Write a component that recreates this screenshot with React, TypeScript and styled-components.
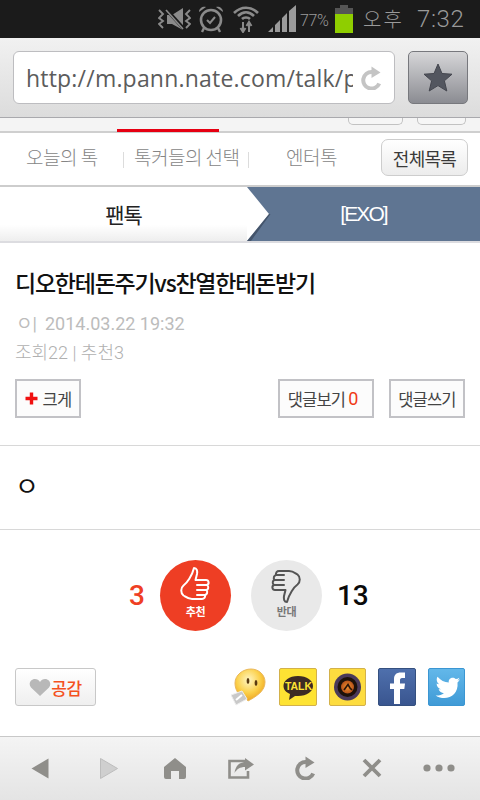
import styled, { createGlobalStyle } from "styled-components"

const cjk = `"Noto Sans CJK KR", "Noto Sans", sans-serif`

const GlobalStyle = createGlobalStyle`
  html, body {
    margin: 0;
    padding: 0;
    background: #fff;
  }
  * {
    box-sizing: border-box;
  }
`

const Screen = styled.div`
  width: 480px;
  height: 800px;
  overflow: hidden;
  display: flex;
  flex-direction: column;
  background: #fff;
  font-family: ${cjk};
`

const StatusBar = styled.div`
  height: 38px;
  flex: none;
  background: #1b1b1b;
  color: #9a9a9a;
  display: flex;
  align-items: center;
  padding-left: 158px;
`

const StatusIcon = styled.svg<{ $gap?: number }>`
  flex: none;
  display: block;
  margin-right: ${(p) => p.$gap ?? 0}px;
`

const Percent = styled.span`
  font-family: Roboto, sans-serif;
  font-size: 16px;
  font-weight: 300;
  letter-spacing: -0.4px;
  width: 35px;
  flex: none;
  margin-top: 3px;
  margin-left: 3px;
`

const Meridiem = styled.span`
  font-size: 20px;
  font-weight: 300;
  letter-spacing: 2px;
  width: 40px;
  flex: none;
  white-space: nowrap;
  margin-left: 10px;
  margin-top: -2px;
`

const Clock = styled.span`
  font-family: Roboto, sans-serif;
  font-size: 24px;
  font-weight: 300;
  letter-spacing: 0.6px;
  margin-left: 14px;
`

const BrowserBar = styled.div`
  height: 80px;
  flex: none;
  background: linear-gradient(#f1f1f1, #dcdcdc);
  border-bottom: 1px solid #a9a9ad;
  display: flex;
  align-items: flex-start;
  padding: 13px 12px 0 13px;
  gap: 13px;
`

const UrlField = styled.div`
  width: 382px;
  height: 53px;
  background: #fff;
  border: 1px solid #bdbdc0;
  border-radius: 6px;
  display: flex;
  align-items: center;
  gap: 8px;
  padding: 0 0 0 12px;
`

const UrlText = styled.div`
  width: 327px;
  flex: none;
  overflow: hidden;
  white-space: nowrap;
  font-family: "Open Sans", sans-serif;
  font-size: 23px;
  line-height: 30px;
  color: #5c5c5c;
  letter-spacing: 0.2px;
`

const StarButton = styled.div`
  width: 60px;
  height: 53px;
  border: 1px solid #77787d;
  border-radius: 5px;
  background: linear-gradient(#d6d6d8, #8b8c92);
  display: flex;
  align-items: center;
  justify-content: center;
`

const SubStrip = styled.div`
  height: 15px;
  flex: none;
  background: #f4f4f4;
  border-bottom: 2px solid #cfcfcf;
  display: flex;
  justify-content: space-between;
  position: relative;
`

const ActiveMark = styled.div`
  position: absolute;
  left: 117px;
  bottom: -1px;
  width: 102px;
  height: 3px;
  background: #e60012;
`

const StubGroup = styled.div`
  margin-left: auto;
  margin-right: 14px;
  display: flex;
  gap: 14px;
`

const Stub = styled.div<{ $w: number }>`
  width: ${(p) => p.$w}px;
  height: 7px;
  background: #f6f6f6;
  border: 1px solid #c2c2c2;
  border-top: none;
  border-radius: 0 0 5px 5px;
`

const NavBar = styled.div`
  height: 52px;
  flex: none;
  background: #fff;
  display: flex;
  align-items: center;
`

const NavItem = styled.span<{ $left: number; $width: number }>`
  margin-left: ${(p) => p.$left}px;
  width: ${(p) => p.$width}px;
  flex: none;
  font-size: 19px;
  font-weight: 300;
  letter-spacing: -0.5px;
  color: #858585;
  white-space: nowrap;
  line-height: 24px;
  margin-top: -4px;
`

const NavDivider = styled.span`
  width: 1px;
  height: 16px;
  margin-top: 2px;
  flex: none;
  background: #dcdcdc;
`

const AllButton = styled.div`
  margin-left: 39px;
  margin-top: -3px;
  width: 87px;
  height: 37px;
  flex: none;
  border: 1px solid #cdcdcd;
  border-radius: 7px;
  background: linear-gradient(#fff, #ececec);
  color: #3a3a3a;
  font-size: 18px;
  letter-spacing: -0.7px;
  display: flex;
  align-items: center;
  justify-content: center;
`

const Crumbs = styled.div`
  height: 58px;
  flex: none;
  border-top: 2px solid #cdcdcd;
  border-bottom: 2px solid #dcdce0;
  display: grid;
  grid-template-columns: 247px 1fr;
  position: relative;
`

const CrumbHome = styled.div`
  background: linear-gradient(#fff 70%, #eeeeee);
  color: #222;
  font-size: 21px;
  letter-spacing: -1px;
  display: flex;
  align-items: center;
  justify-content: center;
`

const CrumbCurrent = styled.div`
  background: #5f7592;
  color: #fff;
  display: flex;
  align-items: center;
  justify-content: center;
  letter-spacing: -1.9px;
  font-family: "Liberation Sans", sans-serif;
  font-size: 21px;
`

const CrumbArrow = styled.svg`
  position: absolute;
  left: 247px;
  top: 0;
`

const Article = styled.div`
  padding: 0 15px;
  height: 203px;
  flex: none;
  border-bottom: 1px solid #d8d8d8;
`

const Title = styled.h1`
  margin: 23px 0 0 0;
  font-size: 23px;
  line-height: 32px;
  font-weight: 500;
  letter-spacing: -1.25px;
  color: #111;
  white-space: nowrap;
`

const MetaLine = styled.div`
  margin: 14px 0 0 1px;
  font-family: Roboto, ${cjk};
  font-size: 18px;
  line-height: 24px;
  color: #bcbcbc;
  white-space: nowrap;
  display: flex;
  gap: 8px;
`

const StatLine = styled.div`
  margin-top: 5px;
  font-family: Roboto, ${cjk};
  font-size: 18px;
  font-weight: 300;
  line-height: 24px;
  color: #b0b0b0;
  white-space: nowrap;
`

const ActionRow = styled.div`
  margin-top: 14px;
  display: flex;
  gap: 15px;
`

const ActionButton = styled.div<{ $w: number; $push?: boolean; $gap: number; $inset?: number }>`
  width: ${(p) => p.$w}px;
  height: 39px;
  margin-left: ${(p) => (p.$push ? "auto" : "0")};
  padding-right: ${(p) => p.$inset ?? 0}px;
  border: 2px solid #c2c2c6;
  background: #fcfcfc;
  color: #444;
  font-size: 16.5px;
  letter-spacing: -0.8px;
  display: flex;
  align-items: center;
  justify-content: center;
  gap: ${(p) => p.$gap}px;
`

const Count = styled.span`
  color: #f03a17;
  font-family: Roboto, sans-serif;
  font-size: 18px;
  letter-spacing: 0;
`

const Body = styled.div`
  height: 84px;
  flex: none;
  border-bottom: 1px solid #d8d8d8;
  padding: 23px 15px 0;
  font-size: 26px;
  line-height: 32px;
  color: #111;
`

const VoteRow = styled.div`
  height: 138px;
  flex: none;
  display: flex;
  align-items: flex-start;
  padding: 30px 0 0 129px;
`

const VoteCount = styled.span<{ $hot?: boolean; $left?: number }>`
  margin-left: ${(p) => p.$left ?? 0}px;
  font-family: Roboto, sans-serif;
  font-size: 28px;
  font-weight: 500;
  line-height: 71px;
  color: ${(p) => (p.$hot ? "#ef3f24" : "#0a0a0a")};
`

const VoteBadge = styled.div<{ $hot?: boolean; $left: number }>`
  width: 71px;
  height: 71px;
  margin-left: ${(p) => p.$left}px;
  border-radius: 50%;
  background: ${(p) => (p.$hot ? "#ee3e24" : "#e9e9e9")};
  color: ${(p) => (p.$hot ? "#fff" : "#777")};
  display: flex;
  flex-direction: column;
  align-items: center;
  padding-top: 6px;
  font-size: 11px;
  font-weight: 700;
  line-height: 14px;
  letter-spacing: -0.5px;
`

const ThumbGraphic = styled.svg<{ $down?: boolean }>`
  display: block;
  transform: ${(p) => (p.$down ? "rotate(180deg)" : "none")};
`

const ShareRow = styled.div`
  height: 68px;
  flex: none;
  display: flex;
  align-items: flex-start;
  padding: 0 15px;
`

const LoveButton = styled.div`
  width: 81px;
  height: 38px;
  border: 1px solid #c8c8c8;
  border-radius: 3px;
  background: linear-gradient(#fff, #efefef);
  color: #f4511e;
  font-size: 17px;
  font-weight: 500;
  letter-spacing: -0.5px;
  display: flex;
  align-items: center;
  justify-content: center;
  margin-right: auto;
`

const ShareIcon = styled.svg<{ $gap: number }>`
  display: block;
  flex: none;
  margin-left: ${(p) => p.$gap}px;
`

const BottomBar = styled.div`
  flex: 1;
  background: linear-gradient(#f4f4f4, #e4e4e4);
  border-top: 1px solid #c8c8c8;
  display: grid;
  grid-template-columns: repeat(7, 1fr);
  padding: 0 8px 0 7px;
  align-items: center;
`

const BarButton = styled.div<{ $nudge?: number }>`
  display: flex;
  justify-content: center;
  margin-top: -1px;
  margin-left: ${(p) => (p.$nudge ?? 0) * 2}px;
`

function ThumbIcon({ color, down }: { color: string; down?: boolean }) {
  return (
    <ThumbGraphic $down={down} width="32" height="38" viewBox="0 0 32 38" aria-hidden>
      <path
        d="M15 2 C18 2 18.5 5 18 8 L16.5 14 L27 14 C30 14 30.5 18 28 19 C30 20.5 29.5 23.5 27.5 24 C29 26 28 28.5 26 29 C26.5 31.5 25 33 23 33 L13 33 C9 33 7 31 4.5 29.5 C1.5 27 1.5 22 4.5 19.5 C8 17 13 10 15 2 Z M18 19 H28 M18 24 H27.5 M18 29 H26"
        fill="none"
        stroke={color}
        strokeWidth="2"
        strokeLinejoin="round"
        strokeLinecap="round"
      />
    </ThumbGraphic>
  )
}

const navIcon = "#8f8e8a"

export default function App() {
  return (
    <Screen>
      <GlobalStyle />
      <StatusBar>
        <StatusIcon width="33" height="24" viewBox="0 0 33 24" $gap={7} aria-hidden>
          <path d="M9 8 H14 L25 1 V23 L14 17 H9 Z" fill="#8a8a8a" />
          <path d="M8 2 L26 22" stroke="#1b1b1b" strokeWidth="3.4" />
          <path d="M8 3 L25 22" stroke="#8a8a8a" strokeWidth="1.6" />
          <path d="M1 3 L5 7 L1 11 L5 14 L1 17 L5 21 M32 3 L28 7 L32 11 L28 14 L32 17 L28 21" fill="none" stroke="#8a8a8a" strokeWidth="1.9" />
        </StatusIcon>
        <StatusIcon width="26" height="28" viewBox="0 0 26 28" $gap={8} aria-hidden>
          <circle cx="13" cy="15" r="10" fill="none" stroke="#8a8a8a" strokeWidth="2.6" />
          <path d="M9 15 L12 18 L17 12" fill="none" stroke="#8a8a8a" strokeWidth="2" />
          <path d="M1 7 C1 3 5 1 8 2 Z M25 7 C25 3 21 1 18 2 Z" fill="#8a8a8a" />
          <path d="M6 23 L4 27 M20 23 L22 27" stroke="#8a8a8a" strokeWidth="2.4" />
        </StatusIcon>
        <StatusIcon width="28" height="28" viewBox="0 0 28 28" $gap={8} aria-hidden>
          <path d="M2 8 C9 1 19 1 26 8 M6 11 C11 6 17 6 22 11 M10 14 C12 12 16 12 18 14" fill="none" stroke="#8a8a8a" strokeWidth="2.6" />
          <path d="M11 17 V26 M8.5 23 L11 27 L13.5 23 M17 27 V18 M14.5 21 L17 17 L19.5 21" fill="none" stroke="#8a8a8a" strokeWidth="2" />
        </StatusIcon>
        <StatusIcon width="29" height="28" viewBox="0 0 29 28" aria-hidden>
          <path d="M0 27 L5 22 V27 Z M7 27 V20 L12 15 V27 Z M14 27 V13 L19 8 V27 Z M21 27 V6 L28 0 V27 Z" fill="#9a9a9a" />
        </StatusIcon>
        <Percent>77%</Percent>
        <StatusIcon width="18" height="28" viewBox="0 0 18 28" aria-hidden>
          <path d="M5 0 H13 V3 H18 V9 H0 V3 H5 Z" fill="#555" />
          <rect y="9" width="18" height="19" fill="#8fce00" />
        </StatusIcon>
        <Meridiem>오후</Meridiem>
        <Clock>7:32</Clock>
      </StatusBar>
      <BrowserBar>
        <UrlField>
          <UrlText>http://m.pann.nate.com/talk/p</UrlText>
          <svg width="22" height="24" viewBox="0 0 22 24" aria-hidden>
            <path d="M18.2 17.5 A8.3 8.3 0 1 1 11 6" fill="none" stroke="#c4c4c4" strokeWidth="4" />
            <path d="M10.5 0.5 L19.5 6.5 L10.5 12 Z" fill="#c4c4c4" />
          </svg>
        </UrlField>
        <StarButton>
          <svg width="30" height="29" viewBox="0 0 30 29" aria-hidden>
            <path d="M15 1 L19 10.5 L29 11.2 L21.4 17.8 L23.8 28 L15 22.6 L6.2 28 L8.6 17.8 L1 11.2 L11 10.5 Z" fill="#53565f" stroke="#44464e" strokeWidth="1" strokeLinejoin="round" />
          </svg>
        </StarButton>
      </BrowserBar>
      <SubStrip>
        <ActiveMark />
        <StubGroup>
          <Stub $w={55} />
          <Stub $w={49} />
        </StubGroup>
      </SubStrip>
      <NavBar>
        <NavItem $left={26} $width={97}>오늘의 톡</NavItem>
        <NavDivider />
        <NavItem $left={10} $width={114}>톡커들의 선택</NavItem>
        <NavDivider />
        <NavItem $left={37} $width={56}>엔터톡</NavItem>
        <AllButton>전체목록</AllButton>
      </NavBar>
      <Crumbs>
        <CrumbHome>팬톡</CrumbHome>
        <CrumbCurrent>[EXO]</CrumbCurrent>
        <CrumbArrow width="24" height="54" viewBox="0 0 24 54" aria-hidden>
          <path d="M0 0 L22 27 L0 54 Z" fill="#fff" />
          <path d="M22 27 L0 54 L4 54 L23.5 27 Z" fill="#3b4a5e" opacity="0.75" />
        </CrumbArrow>
      </Crumbs>
      <Article>
        <Title>디오한테돈주기vs찬열한테돈받기</Title>
        <MetaLine>
          <span>ㅇ|</span>
          <span>2014.03.22 19:32</span>
        </MetaLine>
        <StatLine>조회22 | 추천3</StatLine>
        <ActionRow>
          <ActionButton $w={66} $gap={5}>
            <svg width="13" height="13" viewBox="0 0 13 13" aria-hidden>
              <path d="M6.5 0.5 V12.5 M0.5 6.5 H12.5" stroke="#f01010" strokeWidth="3.4" />
            </svg>
            크게
          </ActionButton>
          <ActionButton $w={96} $gap={3} $inset={6} $push>
            댓글보기<Count>0</Count>
          </ActionButton>
          <ActionButton $w={76} $gap={0}>댓글쓰기</ActionButton>
        </ActionRow>
      </Article>
      <Body>ㅇ</Body>
      <VoteRow>
        <VoteCount $hot>3</VoteCount>
        <VoteBadge $hot $left={15}>
          <ThumbIcon color="#fff" />
          추천
        </VoteBadge>
        <VoteBadge $left={20}>
          <ThumbIcon color="#555" down />
          반대
        </VoteBadge>
        <VoteCount $left={15}>13</VoteCount>
      </VoteRow>
      <ShareRow>
        <LoveButton>
          <svg width="22" height="19" viewBox="0 0 22 19" aria-hidden>
            <path d="M11 18 L2 9.5 C-1 6 1.5 1 6 1 C8 1 10 2 11 4 C12 2 14 1 16 1 C20.5 1 23 6 20 9.5 Z" fill="#b8b8b8" />
          </svg>
          공감
        </LoveButton>
        <ShareIcon width="35" height="38" viewBox="0 0 35 38" $gap={0} aria-hidden>
          <defs>
            <radialGradient id="smile" cx="45%" cy="35%" r="65%">
              <stop offset="0%" stopColor="#fff6c4" />
              <stop offset="60%" stopColor="#fbd04a" />
              <stop offset="100%" stopColor="#eea31e" />
            </radialGradient>
          </defs>
          <path d="M20 1 C28 1 34 7 34 14 C34 23 26 28 17 33 L15 30 C8 29 4 22 4 15 C4 7 12 1 20 1 Z" fill="url(#smile)" stroke="#eab85c" />
          <ellipse cx="17" cy="13" rx="1.4" ry="3" fill="#5a3a10" />
          <ellipse cx="25" cy="15" rx="1.4" ry="3" fill="#5a3a10" />
          <path d="M0 27 L11 23 L16 31 L5 37 Z" fill="#c9c9c9" stroke="#eee" />
          <path d="M5 32 L11 27" stroke="#fff" strokeWidth="2" />
        </ShareIcon>
        <ShareIcon width="38" height="38" viewBox="0 0 38 38" $gap={13} aria-hidden>
          <rect x="0.5" y="0.5" width="37" height="37" rx="1.5" fill="#fee333" stroke="#d3b14a" />
          <path d="M19 8 C28 8 34 12.5 34 18 C34 23.5 28 28 19 28 L16 28 L10 32 L11 26 C7 24.5 4.5 21.5 4.5 18 C4.5 12.5 10 8 19 8 Z" fill="#3d2b24" />
          <text x="19.5" y="22" fontFamily="Liberation Sans, sans-serif" fontSize="10.5" fontWeight="700" textAnchor="middle" fill="#fee333">TALK</text>
        </ShareIcon>
        <ShareIcon width="37" height="38" viewBox="0 0 37 38" $gap={12} aria-hidden>
          <defs>
            <radialGradient id="lens" cx="50%" cy="50%" r="50%">
              <stop offset="0%" stopColor="#f2922e" />
              <stop offset="100%" stopColor="#b5521a" />
            </radialGradient>
          </defs>
          <rect x="0.5" y="0.5" width="36" height="37" rx="1.5" fill="#fddc3f" stroke="#d3b14a" />
          <circle cx="18.5" cy="19" r="13.5" fill="#4a3a5a" />
          <circle cx="18.5" cy="19" r="10" fill="#1e120a" />
          <circle cx="18.5" cy="19" r="6.5" fill="url(#lens)" />
          <path d="M15 22 L19 16.5 L21 20 L23 22" fill="none" stroke="#2a1508" strokeWidth="1.6" />
        </ShareIcon>
        <ShareIcon width="38" height="38" viewBox="0 0 38 38" $gap={12} aria-hidden>
          <defs>
            <linearGradient id="fb" x1="0" y1="0" x2="0" y2="1">
              <stop offset="0%" stopColor="#4f70ad" />
              <stop offset="100%" stopColor="#39558f" />
            </linearGradient>
          </defs>
          <rect x="0.5" y="0.5" width="37" height="37" rx="1.5" fill="url(#fb)" stroke="#35507f" />
          <path d="M16 36 V21 H12 V15.5 H16 V11 C16 6.5 19 4.5 22.5 4.5 H27 V10 H24 C22.5 10 22 11 22 12 V15.5 H27 L26.3 21 H22 V36 Z" fill="#fff" />
        </ShareIcon>
        <ShareIcon width="37" height="38" viewBox="0 0 37 38" $gap={12} aria-hidden>
          <defs>
            <linearGradient id="tw" x1="0" y1="0" x2="0" y2="1">
              <stop offset="0%" stopColor="#63b8ea" />
              <stop offset="100%" stopColor="#3f9ad6" />
            </linearGradient>
          </defs>
          <rect x="0.5" y="0.5" width="36" height="37" rx="1.5" fill="url(#tw)" stroke="#3b96d2" />
          <path d="M32 11 C31 12 30 12.5 29 13 C30 12.3 31 11 31.3 9.7 C30.2 10.4 29 10.9 27.7 11.1 C25 8.2 20 10.5 20.8 14.6 C16.5 14.4 12.5 12.3 9.5 8.8 C8 11.4 8.8 14.6 11.2 16.2 C10.2 16.2 9.4 15.9 8.6 15.5 C8.6 18.3 10.5 20.6 13 21.2 C12.2 21.4 11.4 21.4 10.6 21.3 C11.4 23.5 13.4 25.2 15.9 25.2 C13.5 27 10.6 27.8 7.6 27.5 C18 34 31 27.5 29.5 14.4 C30.5 13.6 31.4 12.4 32 11 Z" fill="#fff" />
        </ShareIcon>
      </ShareRow>
      <BottomBar>
        <BarButton>
          <svg width="18" height="21" viewBox="0 0 18 21" aria-hidden>
            <path d="M17.5 0.5 V20.5 L0.5 10.5 Z" fill={navIcon} />
          </svg>
        </BarButton>
        <BarButton $nudge={2}>
          <svg width="18" height="21" viewBox="0 0 18 21" aria-hidden>
            <path d="M0.5 0.5 V20.5 L17.5 10.5 Z" fill="#cfcfcf" stroke="#bdbdbd" />
          </svg>
        </BarButton>
        <BarButton $nudge={2}>
          <svg width="22" height="21" viewBox="0 0 22 21" aria-hidden>
            <path d="M11 0 L22 9 V19 Q22 21 20 21 H15 V13 H7 V21 H2 Q0 21 0 19 V9 Z" fill={navIcon} />
          </svg>
        </BarButton>
        <BarButton $nudge={2}>
          <svg width="26" height="21" viewBox="0 0 26 21" aria-hidden>
            <path d="M17 8 V3 H1.5 V19.5 H20 V13" fill="none" stroke={navIcon} strokeWidth="2.6" />
            <path d="M17 0 L26 6.5 L17 12.5 V9 C12 9 9 11 6.5 15 C7.5 8 11 4.5 17 4 Z" fill={navIcon} />
          </svg>
        </BarButton>
        <BarButton>
          <svg width="22" height="24" viewBox="0 0 22 24" aria-hidden>
            <path d="M18.2 17.5 A8.3 8.3 0 1 1 11 6" fill="none" stroke={navIcon} strokeWidth="4" />
            <path d="M10.5 0.5 L19.5 6.5 L10.5 12 Z" fill={navIcon} />
          </svg>
        </BarButton>
        <BarButton>
          <svg width="20" height="20" viewBox="0 0 20 20" aria-hidden>
            <path d="M2 2 L18 18 M18 2 L2 18" stroke={navIcon} strokeWidth="3.8" />
          </svg>
        </BarButton>
        <BarButton>
          <svg width="32" height="8" viewBox="0 0 32 8" aria-hidden>
            <circle cx="4" cy="4" r="3.6" fill={navIcon} />
            <circle cx="16" cy="4" r="3.6" fill={navIcon} />
            <circle cx="28" cy="4" r="3.6" fill={navIcon} />
          </svg>
        </BarButton>
      </BottomBar>
    </Screen>
  )
}
